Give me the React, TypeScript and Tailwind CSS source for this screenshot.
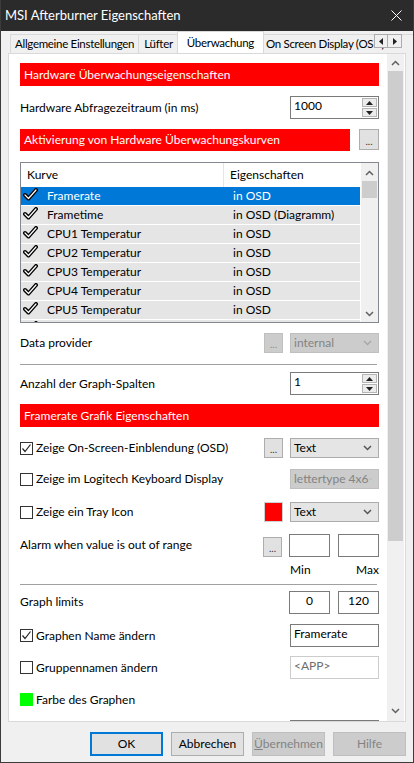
import React from 'react'

const curves = [
  { name: 'Framerate', prop: 'in OSD' },
  { name: 'Frametime', prop: 'in OSD (Diagramm)' },
  { name: 'CPU1 Temperatur', prop: 'in OSD' },
  { name: 'CPU2 Temperatur', prop: 'in OSD' },
  { name: 'CPU3 Temperatur', prop: 'in OSD' },
  { name: 'CPU4 Temperatur', prop: 'in OSD' },
  { name: 'CPU5 Temperatur', prop: 'in OSD' },
  { name: '', prop: '' },
]

function Chevron({ up = false, color = '#606060' }: { up?: boolean; color?: string }) {
  return (
    <svg width="9" height="6" viewBox="0 0 9 6">
      <polyline
        points={up ? '1,5 4.5,1.5 8,5' : '1,1 4.5,4.5 8,1'}
        fill="none"
        stroke={color}
        strokeWidth="1.5"
      />
    </svg>
  )
}

function ListCheck() {
  return (
    <svg width="15" height="13" viewBox="0 0 15 13">
      <path d="M2 7 L5.5 10.5 L13 2" fill="none" stroke="#000" strokeWidth="4" strokeLinecap="round" strokeLinejoin="round" />
      <path d="M2 7 L5.5 10.5 L13 2" fill="none" stroke="#fff" strokeWidth="1.2" strokeLinecap="round" strokeLinejoin="round" />
    </svg>
  )
}

function RedBar({ children, className = '' }: { children: React.ReactNode; className?: string }) {
  return (
    <div className={`bg-[#ff0000] text-white text-[12px] pl-[4px] flex items-center whitespace-nowrap ${className}`}>
      {children}
    </div>
  )
}

function Dots({ disabled = false }: { disabled?: boolean }) {
  return (
    <div
      className={`w-[19px] h-[20px] border flex items-end justify-center pb-[3px] text-[10px] leading-none ${
        disabled ? 'bg-[#cccccc] border-[#bfbfbf] text-[#8a8a8a]' : 'bg-[#e1e1e1] border-[#adadad] text-[#333]'
      }`}
    >
      ...
    </div>
  )
}

function Select({ value, disabled = false }: { value: string; disabled?: boolean }) {
  return (
    <div
      className={`w-[89px] h-[20px] border flex items-center justify-between pl-[3px] pr-[6px] text-[12px] whitespace-nowrap overflow-hidden ${
        disabled ? 'bg-[#cccccc] border-[#bfbfbf] text-[#838383]' : 'bg-[#e5e5e5] border-[#acacac] text-[#000]'
      }`}
    >
      <span>{value}</span>
      <Chevron color={disabled ? '#a8a8a8' : '#555'} />
    </div>
  )
}

function Spin({ value }: { value: string }) {
  return (
    <div className="w-[89px] h-[23px] border border-[#7a7a7a] bg-white flex">
      <div className="flex-1 pl-[3px] pt-[2px] text-[12px] leading-[14px]">{value}</div>
      <div className="w-[16px] flex flex-col gap-px py-px pr-px">
        <div className="flex-1 bg-[#ececec] border border-[#b5b5b5] flex items-center justify-center">
          <svg width="7" height="4" viewBox="0 0 7 4"><polygon points="0,4 3.5,0 7,4" fill="#222" /></svg>
        </div>
        <div className="flex-1 bg-[#ececec] border border-[#b5b5b5] flex items-center justify-center">
          <svg width="7" height="4" viewBox="0 0 7 4"><polygon points="0,0 3.5,4 7,0" fill="#222" /></svg>
        </div>
      </div>
    </div>
  )
}

function Box({ value, className = '', align = 'left', disabled = false }: { value: string; className?: string; align?: string; disabled?: boolean }) {
  return (
    <div
      className={`h-[23px] border bg-white text-[12px] leading-[14px] pt-[2px] px-[3px] ${
        align === 'center' ? 'text-center' : 'text-left'
      } ${disabled ? 'border-[#cccccc] text-[#6d6d6d]' : 'border-[#7a7a7a] text-black'} ${className}`}
    >
      {value}
    </div>
  )
}

function CheckBox({ checked = false }: { checked?: boolean }) {
  return (
    <div className="w-[13px] h-[13px] border border-[#333] bg-white flex items-center justify-center">
      {checked && (
        <svg width="11" height="11" viewBox="0 0 11 11">
          <polyline points="1.5,5.5 4,8.5 9.5,1.5" fill="none" stroke="#222" strokeWidth="1.2" />
        </svg>
      )}
    </div>
  )
}

function Tab({ label, selected = false, className = '' }: { label: string; selected?: boolean; className?: string }) {
  return (
    <div
      className={`shrink-0 border border-[#d9d9d9] border-b-0 flex items-center text-[11.5px] tracking-[-0.3px] whitespace-nowrap overflow-hidden ${
        selected ? 'bg-white h-[23px] -mx-[2px] relative z-10 justify-center -mb-px' : 'bg-[#f0f0f0] h-[19px]'
      } ${className}`}
    >
      {label}
    </div>
  )
}

export default function App() {
  return (
    <div className="w-[414px] h-[763px] bg-[#f0f0f0] border-x border-b border-[#3c3c3c] flex flex-col overflow-hidden text-black font-['Lato','Liberation_Sans',sans-serif]">
      {/* Titelleiste */}
      <div className="h-[31px] shrink-0 bg-[#2b2b2b] flex items-center justify-between pl-[4px] pr-[11px] text-white">
        <span className="text-[13px]">MSI Afterburner Eigenschaften</span>
        <svg width="11" height="11" viewBox="0 0 11 11">
          <path d="M0.5 0.5 L10.5 10.5 M10.5 0.5 L0.5 10.5" stroke="#fff" strokeWidth="1" />
        </svg>
      </div>

      {/* Tabs */}
      <div className="h-[22px] shrink-0 flex items-end pl-[9px] relative overflow-hidden">
        <Tab label="Allgemeine Einstellungen" className="px-[4px]" />
        <Tab label="Lüfter" className="border-l-0 px-[5px]" />
        <Tab label="Überwachung" selected className="px-[9px]" />
        <Tab label="On Screen Display (OSD)" className="border-l-0 pl-[4px] pr-[40px]" />
        <div className="absolute right-[11px] top-[3px] flex z-20">
          <div className="w-[14px] h-[14px] border border-[#adadad] bg-[#f0f0f0] flex items-center justify-center">
            <svg width="4" height="7" viewBox="0 0 4 7"><polygon points="4,0 0,3.5 4,7" fill="#222" /></svg>
          </div>
          <div className="w-[14px] h-[14px] border border-l-0 border-[#adadad] bg-[#f0f0f0] flex items-center justify-center">
            <svg width="4" height="7" viewBox="0 0 4 7"><polygon points="0,0 4,3.5 0,7" fill="#222" /></svg>
          </div>
        </div>
      </div>

      {/* Panel */}
      <div className="ml-[7px] w-[398px] h-[669px] shrink-0 border border-[#d9d9d9] bg-white flex overflow-hidden">
        <div className="flex-1 pl-[11px] pr-[8px] flex flex-col text-[12px] overflow-hidden">
          <RedBar className="mt-[9px] h-[23px] shrink-0">Hardware Überwachungseigenschaften</RedBar>

          <div className="mt-[10px] h-[23px] shrink-0 flex items-center justify-between">
            <span>Hardware Abfragezeitraum (in ms)</span>
            <Spin value="1000" />
          </div>

          <div className="mt-[10px] h-[22px] shrink-0 flex justify-between">
            <RedBar className="w-[330px]">Aktivierung von Hardware Überwachungskurven</RedBar>
            <div className="w-[20px] h-[21px] bg-[#e1e1e1] border border-[#adadad] flex items-end justify-center pb-[3px] text-[10px] leading-none text-[#333]">
              ...
            </div>
          </div>

          {/* Kurvenliste */}
          <div className="mt-[11px] h-[161px] shrink-0 border border-[#828790] flex overflow-hidden">
            <div className="flex-1 flex flex-col overflow-hidden">
              <div className="h-[24px] shrink-0 flex items-center bg-white">
                <div className="w-[203px] pl-[6px] border-r border-[#e5e5e5] h-full flex items-center">Kurve</div>
                <div className="pl-[6px]">Eigenschaften</div>
              </div>
              {curves.map((c, i) => (
                <div
                  key={i}
                  className={`h-[18px] shrink-0 mb-px flex items-center ${
                    i === 0 ? 'bg-[#0078d7] text-white' : 'bg-[#e5e5e5]'
                  }`}
                >
                  <div className="w-[26px] pl-[2px] flex items-center -mt-[3px]">
                    <ListCheck />
                  </div>
                  <div className="w-[186px]">{c.name}</div>
                  <div>{c.prop}</div>
                </div>
              ))}
            </div>
            <div className="w-[17px] ml-[1px] bg-[#f0f0f0] flex flex-col items-center">
              <div className="h-[17px] flex items-center justify-center mt-[1px]">
                <Chevron up />
              </div>
              <div className="w-[15px] h-[17px] bg-[#cdcdcd]" />
              <div className="flex-1" />
              <div className="h-[17px] flex items-center justify-center">
                <Chevron />
              </div>
            </div>
          </div>

          <div className="mt-[10px] h-[20px] shrink-0 flex items-center justify-between">
            <span>Data provider</span>
            <div className="flex gap-[7px]">
              <Dots disabled />
              <Select value="internal" disabled />
            </div>
          </div>

          <div className="mt-[11px] h-px shrink-0 bg-[#a0a0a0] mr-[2px]" />

          <div className="mt-[7px] h-[23px] shrink-0 flex items-center justify-between">
            <span>Anzahl der Graph-Spalten</span>
            <Spin value="1" />
          </div>

          <RedBar className="mt-[9px] h-[23px] shrink-0">Framerate Grafik Eigenschaften</RedBar>

          <div className="mt-[11px] h-[20px] shrink-0 flex items-center justify-between">
            <div className="flex items-center gap-[3px]">
              <CheckBox checked />
              <span>Zeige On-Screen-Einblendung (OSD)</span>
            </div>
            <div className="flex gap-[7px]">
              <Dots />
              <Select value="Text" />
            </div>
          </div>

          <div className="mt-[11px] h-[20px] shrink-0 flex items-center justify-between">
            <div className="flex items-center gap-[3px]">
              <CheckBox />
              <span>Zeige im Logitech Keyboard Display</span>
            </div>
            <Select value="lettertype 4x6" disabled />
          </div>

          <div className="mt-[13px] h-[20px] shrink-0 flex items-center justify-between">
            <div className="flex items-center gap-[3px]">
              <CheckBox />
              <span>Zeige ein Tray Icon</span>
            </div>
            <div className="flex gap-[7px]">
              <div className="w-[19px] h-[20px] bg-[#ff0000] border border-[#d0d0d0]" />
              <Select value="Text" />
            </div>
          </div>

          <div className="mt-[12px] h-[22px] shrink-0 flex items-center justify-between">
            <span>Alarm when value is out of range</span>
            <div className="flex gap-[7px] items-start">
              <div className="mt-[3px]">
                <Dots />
              </div>
              <div className="flex gap-[8px]">
                <Box value="" className="w-[41px] h-[22px]" />
                <Box value="" className="w-[41px] h-[22px]" />
              </div>
            </div>
          </div>
          <div className="mt-[5px] h-[14px] shrink-0 flex justify-end">
            <div className="w-[89px] flex justify-between">
              <span>Min</span>
              <span>Max</span>
            </div>
          </div>

          <div className="mt-[9px] h-px shrink-0 bg-[#a0a0a0] mr-[2px]" />

          <div className="mt-[6px] h-[22px] shrink-0 flex items-center justify-between">
            <span>Graph limits</span>
            <div className="flex gap-[8px]">
              <Box value="0" align="center" className="w-[41px] h-[22px]" />
              <Box value="120" align="center" className="w-[41px] h-[22px]" />
            </div>
          </div>

          <div className="mt-[11px] h-[23px] shrink-0 flex items-center justify-between">
            <div className="flex items-center gap-[3px]">
              <CheckBox checked />
              <span>Graphen Name ändern</span>
            </div>
            <Box value="Framerate" className="w-[89px]" />
          </div>

          <div className="mt-[9px] h-[23px] shrink-0 flex items-center justify-between">
            <div className="flex items-center gap-[3px]">
              <CheckBox />
              <span>Gruppennamen ändern</span>
            </div>
            <Box value="<APP>" disabled className="w-[89px]" />
          </div>

          <div className="mt-[13px] h-[15px] shrink-0 flex items-center gap-[3px]">
            <div className="w-[13px] h-[13px] bg-[#00ff00]" />
            <span>Farbe des Graphen</span>
          </div>

          <div className="mt-[13px] h-[23px] shrink-0 flex justify-end">
            <Box value="" className="w-[89px]" />
          </div>
        </div>

        {/* Panel-Scrollbar */}
        <div className="w-[17px] mr-[1px] bg-[#f0f0f0] flex flex-col items-center">
          <div className="h-[17px] flex items-center justify-center">
            <Chevron up />
          </div>
          <div className="w-[15px] h-[470px] bg-[#cdcdcd]" />
          <div className="flex-1" />
          <div className="h-[17px] flex items-center justify-center mb-[2px]">
            <Chevron />
          </div>
        </div>
      </div>

      {/* Buttons */}
      <div className="flex justify-end gap-[8px] pr-[7px] pt-[10px] text-[12px]">
        <div className="w-[73px] h-[24px] bg-[#e1e1e1] border-2 border-[#0078d7] flex items-center justify-center">OK</div>
        <div className="w-[73px] h-[24px] bg-[#e1e1e1] border border-[#adadad] flex items-center justify-center">Abbrechen</div>
        <div className="w-[73px] h-[24px] bg-[#cccccc] border border-[#bfbfbf] flex items-center justify-center text-[#838383]">
          <span><span className="underline">Ü</span>bernehmen</span>
        </div>
        <div className="w-[73px] h-[24px] bg-[#cccccc] border border-[#bfbfbf] flex items-center justify-center text-[#838383]">Hilfe</div>
      </div>
    </div>
  )
}
